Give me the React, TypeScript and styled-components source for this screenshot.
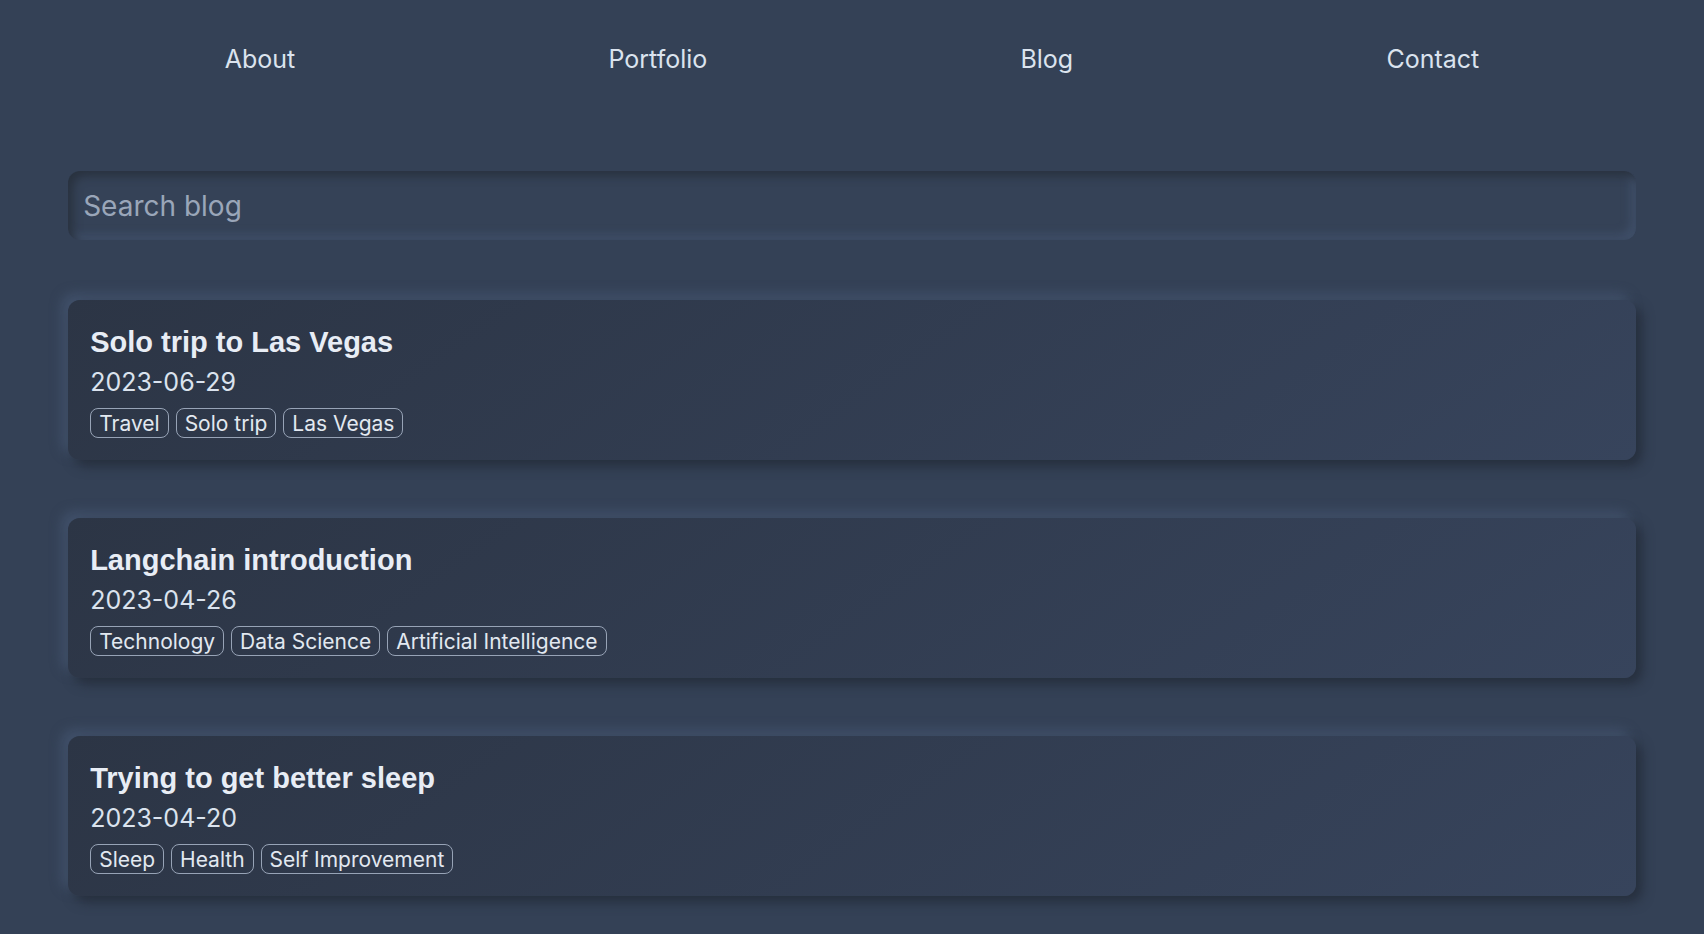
import React from 'react'
import styled, { createGlobalStyle } from 'styled-components'

const GlobalStyle = createGlobalStyle`
    html, body {
        margin: 0;
        padding: 0;
        background: #344156;
        min-height: 100%;
    }
    body {
        font-family: Inter, 'Noto Sans', sans-serif;
        color: #e2e8f0;
    }
`

const Page = styled.div`
    width: 92%;
    margin: 0 auto;
    min-height: 934px;
`

const Nav = styled.nav`
    display: flex;
    justify-content: space-around;
    align-items: center;
    height: 118px;
`

const NavLink = styled.a`
    font-size: 25px;
    color: #dbe3ee;
    text-decoration: none;
    cursor: pointer;
`

const SearchInput = styled.input`
    display: block;
    box-sizing: border-box;
    width: 100%;
    height: 69px;
    margin-top: 53px;
    padding: 0 15px;
    border: none;
    outline: none;
    border-radius: 12px;
    background: #354257;
    box-shadow: inset 5px 5px 10px #29323f, inset -5px -5px 10px #40506a;
    font-family: Inter, sans-serif;
    font-size: 28px;
    color: #e2e8f0;

    &::placeholder {
        color: #9aa6b9;
    }
`

const PostList = styled.div`
    display: flex;
    flex-direction: column;
    row-gap: 58px;
    margin-top: 60px;
`

const Card = styled.article`
    box-sizing: border-box;
    height: 160px;
    padding: 23px 22px 0;
    border-radius: 12px;
    background: linear-gradient(145deg, #2c3545, #37445c);
    box-shadow: 6px 6px 12px #262f3d, -6px -6px 12px #42526c;
    display: flex;
    flex-direction: column;
    align-items: flex-start;
`

const CardTitle = styled.h2`
    margin: 0;
    font-family: 'Liberation Sans', Arial, sans-serif;
    font-weight: 700;
    font-size: 29px;
    line-height: 38px;
    color: #e8edf5;
`

const CardDate = styled.div`
    font-size: 25px;
    line-height: 42px;
    color: #dbe3ee;
`

const TagRow = styled.div`
    display: flex;
    column-gap: 7px;
    margin-top: 5px;
`

const Tag = styled.span`
    box-sizing: border-box;
    height: 30px;
    padding: 0 8px;
    display: flex;
    align-items: center;
    border: 1px solid #97a3b6;
    border-radius: 8px;
    font-size: 21px;
    color: #e2e8f0;
`

type Post = {
    title: string;
    date: string;
    tags: string[];
}

const posts: Post[] = [
    { title: 'Solo trip to Las Vegas', date: '2023-06-29', tags: ['Travel', 'Solo trip', 'Las Vegas'] },
    { title: 'Langchain introduction', date: '2023-04-26', tags: ['Technology', 'Data Science', 'Artificial Intelligence'] },
    { title: 'Trying to get better sleep', date: '2023-04-20', tags: ['Sleep', 'Health', 'Self Improvement'] },
]

const PostCard = ({ title, date, tags }: Post) => (
    <Card>
        <CardTitle>{title}</CardTitle>
        <CardDate>{date}</CardDate>
        <TagRow>
            {tags.map(t => <Tag key={t}>{t}</Tag>)}
        </TagRow>
    </Card>
)

export default function App() {
    return (
        <>
            <GlobalStyle />
            <Page>
                <Nav>
                    <NavLink>About</NavLink>
                    <NavLink>Portfolio</NavLink>
                    <NavLink>Blog</NavLink>
                    <NavLink>Contact</NavLink>
                </Nav>
                <SearchInput placeholder='Search blog' />
                <PostList>
                    {posts.map(p => <PostCard key={p.title} {...p} />)}
                </PostList>
            </Page>
        </>
    )
}
